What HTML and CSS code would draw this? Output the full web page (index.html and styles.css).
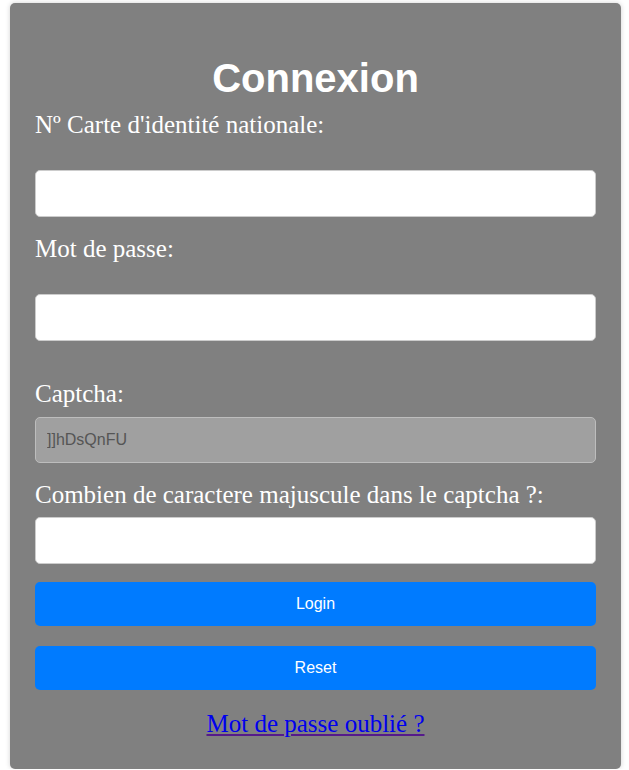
FILE: index.html
```html
<!DOCTYPE html>
<html lang="fr">
<head>
<meta charset="utf-8">
<title>Connexion</title>
<link rel="stylesheet" href="styles.css">
</head>
<body>
<div class="card">
  <h2 class="title">Connexion</h2>
  <form class="form">
    <label class="label label-gap" for="cin">Nº Carte d'identité nationale:</label>
    <input class="field" id="cin" type="text">
    <label class="label label-gap" for="pwd">Mot de passe:</label>
    <input class="field" id="pwd" type="password">
    <label class="label label-captcha" for="captcha">Captcha:</label>
    <input class="field field-captcha" id="captcha" type="text" value="]]hDsQnFU" readonly>
    <label class="label" for="count">Combien de caractere majuscule dans le captcha ?:</label>
    <input class="field" id="count" type="text">
    <button class="btn" type="submit">Login</button>
    <button class="btn" type="reset">Reset</button>
    <a class="forgot" href="#">Mot de passe oublié ?</a>
  </form>
</div>
</body>
</html>
```

FILE: styles.css
```css
html, body {
  margin: 0;
  padding: 0;
  background: #ffffff;
}

.card {
  box-sizing: border-box;
  width: 611px;
  margin: 3px 0 0 10px;
  padding: 0 25px 31px;
  background: #808080;
  border-radius: 5px;
  box-shadow: 0 0 5px rgba(0, 0, 0, 0.18);
}

.title {
  margin: 0;
  padding-top: 52px;
  font-family: "Liberation Sans", Arial, sans-serif;
  font-weight: bold;
  font-size: 40px;
  line-height: 46px;
  color: #ffffff;
  text-align: center;
}

.form {
  display: flex;
  flex-direction: column;
  margin-top: 10px;
}

.label {
  display: block;
  font-family: "Liberation Serif", "Times New Roman", serif;
  font-size: 25px;
  line-height: 28px;
  color: #ffffff;
  margin-bottom: 8px;
}

.label-gap {
  margin-bottom: 31px;
}

.label-captcha {
  margin-top: 21px;
  margin-bottom: 9px;
}

.field {
  box-sizing: border-box;
  width: 100%;
  height: 47px;
  margin: 0 0 18px;
  padding: 0 11px;
  border: 1px solid #cccccc;
  border-radius: 5px;
  background: #ffffff;
  font-family: "Liberation Sans", Arial, sans-serif;
  font-size: 16px;
  color: #333333;
  outline: none;
}

.field-captcha {
  height: 46px;
  background: #a0a0a0;
  border-color: #bdbdbd;
  color: #555555;
}

.btn {
  box-sizing: border-box;
  width: 100%;
  height: 44px;
  margin: 0 0 20px;
  border: none;
  border-radius: 5px;
  background: #007bff;
  color: #ffffff;
  font-family: "Liberation Sans", Arial, sans-serif;
  font-size: 16px;
  cursor: pointer;
}

.forgot {
  align-self: center;
  font-family: "Liberation Serif", "Times New Roman", serif;
  font-size: 25px;
  line-height: 28px;
  color: #0000ee;
  text-decoration: underline;
  text-decoration-color: #551a8b;
}
```
